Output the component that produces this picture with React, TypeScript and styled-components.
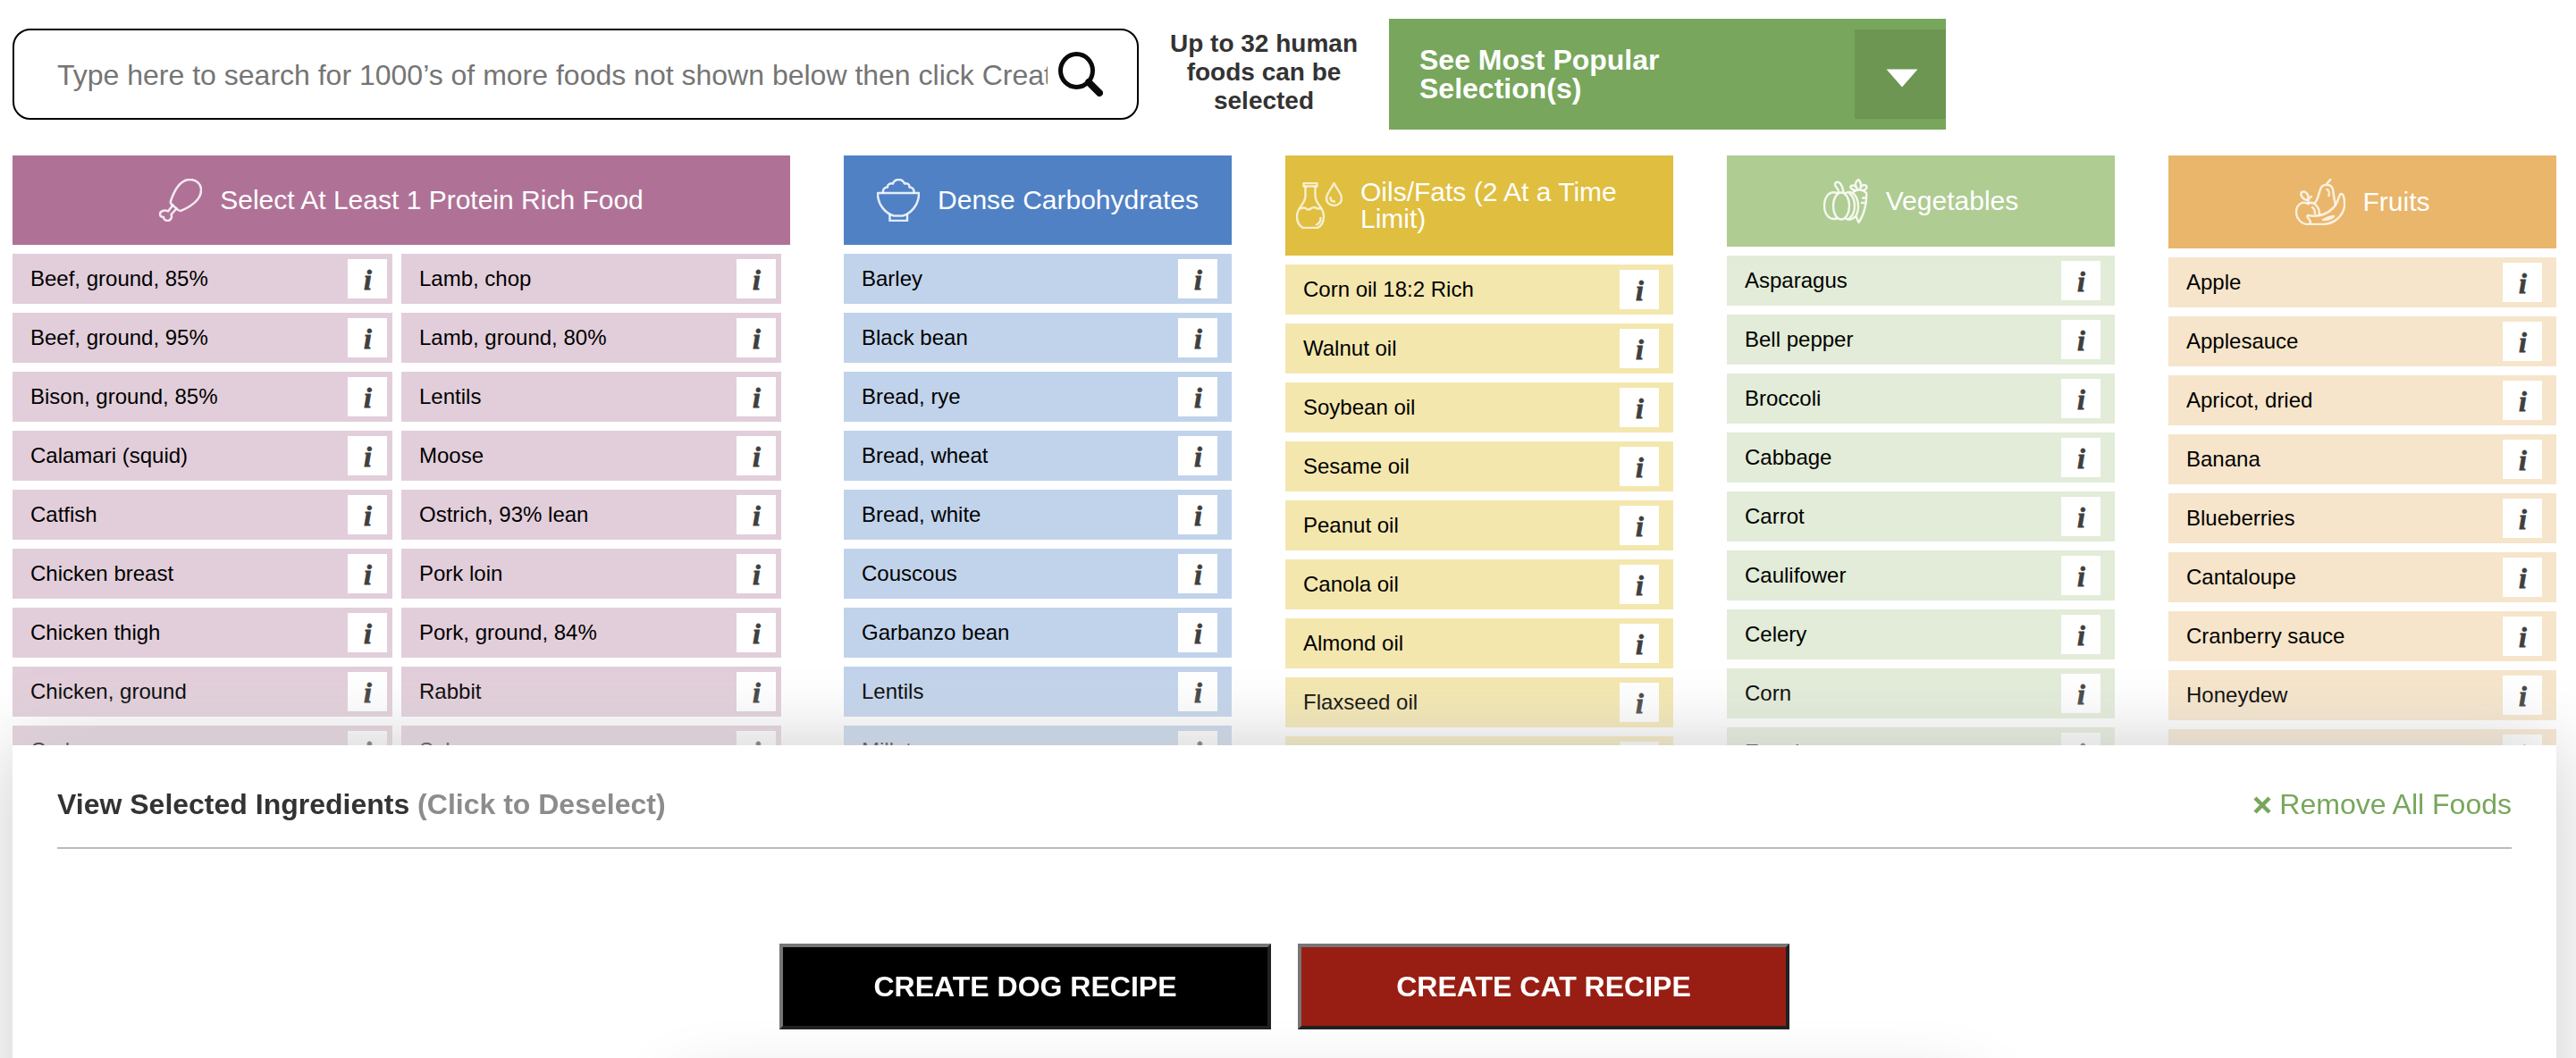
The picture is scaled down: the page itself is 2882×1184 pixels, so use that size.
import React from "react";
import styled, { createGlobalStyle } from "styled-components";

const GlobalStyle = createGlobalStyle`
  *, *::before, *::after { box-sizing: border-box; }
  html, body { margin: 0; background: #fff; }
  body { font-family: "Liberation Sans", Helvetica, Arial, sans-serif; color: #333; overflow: hidden; }
`;

const Page = styled.div`
  width: 2882px;
  height: 1184px;
  overflow: hidden;
  padding: 21px 14px 0;
`;

const TopBar = styled.div`
  display: flex;
  align-items: flex-start;
  height: 153px;
`;

const SearchBox = styled.label`
  display: flex;
  align-items: center;
  width: 1260px;
  height: 102px;
  margin-top: 11px;
  padding: 0 38px 0 48px;
  border: 2px solid #000;
  border-radius: 20px;
`;

const SearchInput = styled.input`
  width: 1108px;
  height: 90px;
  margin-right: 12px;
  padding: 2px 0 0;
  border: 0;
  outline: 0;
  background: transparent;
  font: 32px "Liberation Sans", Helvetica, Arial, sans-serif;
  &::placeholder { color: #757575; opacity: 1; }
`;

const Limit = styled.p`
  width: 280px;
  margin: 12px 0 0;
  padding: 0 30px;
  font-size: 28px;
  line-height: 32px;
  font-weight: 700;
  text-align: center;
`;

const Popular = styled.div`
  display: flex;
  align-items: center;
  justify-content: space-between;
  width: 623px;
  height: 124px;
  padding-left: 34px;
  background: #78a65c;
  color: #fff;
`;

const PopularLabel = styled.span`
  width: 330px;
  font-size: 32px;
  line-height: 32px;
  font-weight: 700;
`;

const PopularArrow = styled.span`
  display: flex;
  align-items: center;
  justify-content: center;
  width: 102px;
  height: 100px;
  padding: 8px 0 0 4px;
  background: #6c9651;
`;

const Columns = styled.div`
  display: flex;
  align-items: flex-start;
  gap: 60px;
`;

const Column = styled.section<{ $wide?: boolean }>`
  flex: none;
  width: ${(p) => (p.$wide ? 870 : 434)}px;
`;

const ColumnHeader = styled.header<{ $bg: string }>`
  display: flex;
  align-items: center;
  justify-content: center;
  gap: 20px;
  padding: 26px 12px;
  margin-bottom: 10px;
  background: ${(p) => p.$bg};
  color: #fff;
  font-size: 30px;
  line-height: 30px;
  svg { flex: none; display: block; }
`;

const Lists = styled.div`
  display: flex;
  gap: 10px;
`;

const List = styled.ul<{ $width: number }>`
  display: flex;
  flex-direction: column;
  gap: 10px;
  width: ${(p) => p.$width}px;
  margin: 0;
  padding: 0;
  list-style: none;
`;

const Item = styled.li<{ $bg: string; $inset: number }>`
  display: flex;
  align-items: center;
  justify-content: space-between;
  height: 56px;
  padding: 0 ${(p) => p.$inset}px 0 20px;
  background: ${(p) => p.$bg};
  color: #000;
  font-size: 24px;
  line-height: 28px;
`;

const Info = styled.span`
  display: flex;
  align-items: center;
  justify-content: center;
  width: 44px;
  height: 44px;
  padding: 1px 0 0 1px;
  background: #fff;
  color: #3f3f3f;
  -webkit-text-stroke: 0.8px #3f3f3f;
  font: italic 700 32px/40px "Liberation Serif", "Times New Roman", serif;
`;

const Panel = styled.div`
  position: fixed;
  left: 14px;
  bottom: -100px;
  width: 2846px;
  height: 450px;
  padding: 0 50px;
  background: #fff;
  box-shadow: 0 0 80px #ccc;
`;

const PanelHead = styled.div`
  display: flex;
  align-items: center;
  justify-content: space-between;
  height: 116px;
  padding: 18px 0 0;
  border-bottom: 2px solid #bbb;
  font-size: 32px;
  line-height: 36px;
`;

const PanelTitle = styled.h2`
  margin: 0;
  font-size: 32px;
  font-weight: 700;
  span { color: #8c8c8c; }
`;

const RemoveAll = styled.a`
  display: flex;
  align-items: center;
  gap: 9px;
  color: #78a65c;
  svg { margin-top: 1px; }
`;

const Actions = styled.div`
  position: relative;
  z-index: 1;
  display: flex;
  gap: 30px;
  margin: 106px 0 0 808px;
`;

const ActionButton = styled.button<{ $bg: string }>`
  width: 550px;
  height: 96px;
  padding: 0;
  border: 4px solid;
  border-color: #767676 #212121 #212121 #767676;
  background: ${(p) => p.$bg};
  color: #fff;
  font: 700 32px "Liberation Sans", Helvetica, Arial, sans-serif;
`;

const FootGlow = styled.div`
  position: absolute;
  left: 750px;
  top: 387px;
  width: 1440px;
  height: 100px;
  box-shadow: 0 0 80px #ccc;
`;

const line = {
  fill: "none",
  stroke: "#fff",
  strokeOpacity: 0.85,
  strokeWidth: 2.5,
  strokeLinecap: "round" as const,
  strokeLinejoin: "round" as const,
};

const Drumstick = () => (
  <svg width="48" height="48" viewBox="0 0 48 48" {...line}>
    <path d="M13 25C17 13 24 1 34.500 1C42 1 47 6 47 13C47 24 34 32 24 36C21 36 20 34 18 32C15 30 12 28 13 25Z" />
    <path d="M15.500 29.500L10 36.500C6 34.500 1 36 1 39.500C1 42 3 43 5 43C5 45 7 47 9.500 47C13 47 15 43 13.500 40L19.500 33.500" />
  </svg>
);

const RiceBowl = () => (
  <svg width="48" height="48" viewBox="0 0 48 48" {...line}>
    <path d="M1 16H47V18.500C46 30 38 39 29 41.500H19C10 39 2 30 1 18.500Z" />
    <path d="M14.500 40.500V47H34V40.500" />
    <path d="M7 15.500C6.500 12 8.500 9.500 12 9.500C11.500 6.500 15 4.500 18 5.500C19 2.500 21 1 24.500 1C28 1 30 3 31 5.500C34 4.500 37 6.500 36.500 9.500C39.500 9.500 42 12 41.500 15.500" />
  </svg>
);

const OilFlask = () => (
  <svg width="52" height="52" viewBox="0 0 52 52" {...line} strokeOpacity={0.72}>
    <path d="M8.500 1H23.500V4.500H8.500Z" />
    <path d="M10.500 5V15C10.500 25 1 27 1 38C1 44 4 49 8 51H24C28 49 31 44 31 38C31 27 21.500 25 21.500 15V5" />
    <path d="M5 29.500C8 28 10 28 12 30C15 32 17 28 20 28C23 28 24 31 28 29M27.500 40C27.500 44 26 46 23 47.500" />
    <path d="M42.500 1C40 7 34 12 34 18C34 23 38 26 42.500 26C47 26 51 23 51 18C51 12 45 7 42.500 1Z" />
    <path d="M38.500 17C38.500 20 40 21.500 43 21.500" />
  </svg>
);

const Pumpkin = () => (
  <svg width="50" height="50" viewBox="0 0 50 50" {...line}>
    <ellipse cx="20" cy="30.500" rx="9" ry="15" />
    <path d="M15 16C6 13 1 21 1 30.500C1 40 7 47 15 44.500M25 16C29 14 33 15 35 18C41 26 40 41 33 44.500C30 46 27 46 25 44.500M29 16C37 23 37 38 29 44.500" />
    <path d="M17 15C17 10 12.500 9 13 6C14 2.500 18 3 20 7C22 11 22 13 22.500 15" />
    <path d="M34 14.500C38 11.500 45 12 48 16C49 27 45 41 39.500 49C38.500 47 37.500 45 37 43M44 21.500H48M43 27H47" />
    <path d="M35 13C29 11 29 7 34 7.500C36 8 37 10 38 11.500C34.500 7 36 3 39 1C42.500 4 43 7 41 11.500C42 8 45 6 47.500 7.500C50 10 47 13 44 13" />
  </svg>
);

const FruitMix = () => (
  <svg width="56" height="52" viewBox="0 0 56 52" {...line} strokeOpacity={0.78}>
    <path d="M14 28C7 24 1 30 1 37C1 45 7 51 14 51H32C44 50 53 42 55 31C55.500 24 54 16 51 17C48 18 49 26 42 33C35 40 25 43 14 41C11 43 20 47 16 51" />
    <path d="M14 28C21 24 27 32 27 40" />
    <path d="M14.500 27C14 24 15 21 18 20M13 24C8 23 5 18 7 15C11 13 16 18 14 23" />
    <path d="M39.500 0C38 4 35 4 35 7M22 27C26 22 26 16 28 12C30 5 40 5 42 12C43 18 43 22 45 29" />
    <path d="M35.500 12C38 13 38 17 37.500 19M19 32C22 34 22 37 22 39M31 46C36 46 40 45 43 42C39 42 35 44 31 46" />
  </svg>
);

const SearchIcon = () => (
  <svg width="50" height="50" viewBox="0 0 50 50" fill="none" stroke="#0a0a0a">
    <ellipse cx="20.500" cy="21" rx="18" ry="18.500" strokeWidth="5" />
    <path d="M34 34L46 46" strokeWidth="8" strokeLinecap="round" />
  </svg>
);

type Group = {
  title: string;
  icon: React.ReactNode;
  head: string;
  body: string;
  lists: string[][];
};

const groups: Group[] = [
  {
    title: "Select At Least 1 Protein Rich Food",
    icon: <Drumstick />,
    head: "#af7296",
    body: "#e2ceda",
    lists: [
      ["Beef, ground, 85%", "Beef, ground, 95%", "Bison, ground, 85%", "Calamari (squid)", "Catfish", "Chicken breast", "Chicken thigh", "Chicken, ground", "Cod"],
      ["Lamb, chop", "Lamb, ground, 80%", "Lentils", "Moose", "Ostrich, 93% lean", "Pork loin", "Pork, ground, 84%", "Rabbit", "Salmon"],
    ],
  },
  {
    title: "Dense Carbohydrates",
    icon: <RiceBowl />,
    head: "#5081c5",
    body: "#c1d3eb",
    lists: [["Barley", "Black bean", "Bread, rye", "Bread, wheat", "Bread, white", "Couscous", "Garbanzo bean", "Lentils", "Millet"]],
  },
  {
    title: "Oils/Fats (2 At a Time Limit)",
    icon: <OilFlask />,
    head: "#e0be3f",
    body: "#f4e7ae",
    lists: [["Corn oil 18:2 Rich", "Walnut oil", "Soybean oil", "Sesame oil", "Peanut oil", "Canola oil", "Almond oil", "Flaxseed oil", ""]],
  },
  {
    title: "Vegetables",
    icon: <Pumpkin />,
    head: "#afcc92",
    body: "#e2ecd8",
    lists: [["Asparagus", "Bell pepper", "Broccoli", "Cabbage", "Carrot", "Caulifower", "Celery", "Corn", "Eggplant"]],
  },
  {
    title: "Fruits",
    icon: <FruitMix />,
    head: "#eab66b",
    body: "#f6e5ca",
    lists: [["Apple", "Applesauce", "Apricot, dried", "Banana", "Blueberries", "Cantaloupe", "Cranberry sauce", "Honeydew", ""]],
  },
];

export default function App() {
  return (
    <Page>
      <GlobalStyle />
      <TopBar>
        <SearchBox>
          <SearchInput placeholder="Type here to search for 1000’s of more foods not shown below then click Create" />
          <SearchIcon />
        </SearchBox>
        <Limit>Up to 32 human foods can be selected</Limit>
        <Popular>
          <PopularLabel>See Most Popular Selection(s)</PopularLabel>
          <PopularArrow>
            <svg width="36" height="21" viewBox="0 0 36 21">
              <path d="M0.500 0.500H35.500L18 20.500Z" fill="#fff" />
            </svg>
          </PopularArrow>
        </Popular>
      </TopBar>
      <Columns>
        {groups.map((g) => {
          const wide = g.lists.length > 1;
          return (
            <Column key={g.title} $wide={wide}>
              <ColumnHeader $bg={g.head}>
                {g.icon}
                <span>{g.title}</span>
              </ColumnHeader>
              <Lists>
                {g.lists.map((names, n) => (
                  <List key={n} $width={wide ? 425 : 434}>
                    {names.map((name, i) => (
                      <Item key={i} $bg={g.body} $inset={wide ? 6 : 16}>
                        <span>{name}</span>
                        <Info>i</Info>
                      </Item>
                    ))}
                  </List>
                ))}
              </Lists>
            </Column>
          );
        })}
      </Columns>
      <Panel>
        <PanelHead>
          <PanelTitle>
            View Selected Ingredients <span>(Click to Deselect)</span>
          </PanelTitle>
          <RemoveAll>
            <svg width="20" height="20" viewBox="0 0 20 20" stroke="#78a65c" strokeWidth="4.500">
              <path d="M2 2L18 18M18 2L2 18" />
            </svg>
            Remove All Foods
          </RemoveAll>
        </PanelHead>
        <Actions>
          <ActionButton $bg="#000">CREATE DOG RECIPE</ActionButton>
          <ActionButton $bg="#981e13">CREATE CAT RECIPE</ActionButton>
        </Actions>
        <FootGlow />
      </Panel>
    </Page>
  );
}
